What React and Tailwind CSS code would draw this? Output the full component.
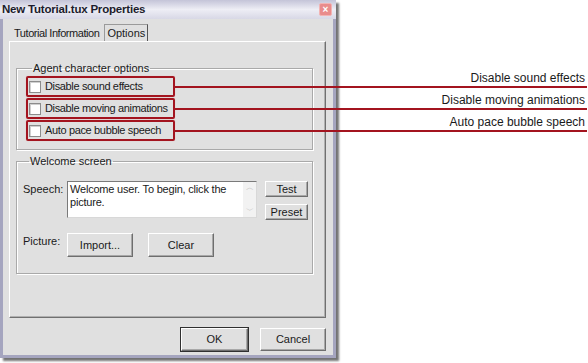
import React from "react";

const font = "font-['Liberation_Sans',Arial,sans-serif]";

const Btn = ({ label, className = "" }) => (
  <div
    className={`flex items-center justify-center bg-[#e0e0e0] border border-t-white border-l-white border-r-[#6e6e6e] border-b-[#6e6e6e] shadow-[inset_-1px_-1px_0_#a8a8a8] text-[11px] text-[#1a1a1a] ${className}`}
  >
    {label}
  </div>
);

const Option = ({ label, note }) => (
  <div className="relative w-[149px] h-[21px] border-2 border-[#a3141f] rounded-[2px] shadow-[0_0_1px_#e8a0a0] flex items-center pl-[1px]">
    <div className="w-[12px] h-[12px] bg-white border border-[#8c8c8c] shadow-[inset_1px_1px_0_#d0d0d0]" />
    <span className="ml-[4px] text-[11px] tracking-[-0.35px] text-[#1a1a1a] whitespace-nowrap">{label}</span>
    {/* callout line + note */}
    <div className="absolute left-full top-[8px] w-[414px] h-[2px] bg-[#a3141f]">
      <span className="absolute bottom-[3px] right-[2px] text-[12px] leading-[14px] text-[#1a1a1a] whitespace-nowrap">
        {note}
      </span>
    </div>
  </div>
);

const Group = ({ title, className = "", children }) => (
  <fieldset className={`border border-[#a9a9a9] shadow-[1px_1px_0_white,inset_1px_1px_0_white] ${className}`}>
    <legend className="ml-[6px] px-[1px] text-[11px] leading-[12px] text-[#1a1a1a]">{title}</legend>
    {children}
  </fieldset>
);

export default function App() {
  return (
    <div className={`relative w-[588px] h-[363px] bg-white overflow-hidden ${font}`}>
      {/* Dialog window */}
      <div className="w-[336px] h-[358px] flex flex-col bg-[#a5a5bf] shadow-[3px_3px_2px_rgba(0,0,0,0.55)]">
        {/* Title bar */}
        <div className="h-[19px] flex items-center justify-between pl-[2px] pr-[4px] bg-gradient-to-b from-[#c4c4d8] via-[#eeeef5] to-[#d8d8e6]">
          <span className="text-[11.5px] font-bold tracking-[-0.2px] text-[#1c1c2c]">New Tutorial.tux Properties</span>
          <div className="w-[13px] h-[13px] rounded-[2px] bg-[#e98c8c] border border-[#f2b4b4] flex items-center justify-center text-white text-[10px] leading-none font-bold">
            ×
          </div>
        </div>

        {/* Client area */}
        <div className="flex-1 mx-[3px] mb-[3px] bg-[#e0e0e0] flex flex-col px-[6px] pr-[7px]">
          {/* Tabs */}
          <div className="h-[22px] flex items-end pl-[5px]">
            <div className="h-[16px] flex items-center text-[11px] tracking-[-0.45px] text-[#1a1a1a]">Tutorial Information</div>
            <div className="ml-[5px] h-[17px] w-[44px] flex items-center justify-center border border-[#9a9a9a] border-r-[#555] border-b-0 text-[11px] text-[#1a1a1a]">
              Options
            </div>
          </div>

          {/* Tab panel */}
          <div className="h-[277px] border border-t-white border-l-white border-r-[#707070] border-b-[#707070] shadow-[inset_-1px_-1px_0_#b0b0b0] pl-[6px] pr-[12px] pt-[20px]">
            <Group title="Agent character options" className="h-[88px] pl-[9px] pt-[2px]">
              <div className="flex flex-col gap-[1px]">
                <Option label="Disable sound effects" note="Disable sound effects" />
                <Option label="Disable moving animations" note="Disable moving animations" />
                <Option label="Auto pace bubble speech" note="Auto pace bubble speech" />
              </div>
            </Group>

            <Group title="Welcome screen" className="mt-[5px] h-[119px] pl-[6px] pt-[14px]">
              <div className="flex">
                <span className="w-[44px] text-[11px] text-[#1a1a1a]">Speech:</span>
                <div className="w-[190px] h-[37px] bg-white border border-t-[#7a7a7a] border-l-[#7a7a7a] border-r-[#d8d8d8] border-b-[#d8d8d8] flex">
                  <div className="flex-1 pl-[2px] pt-[1px] text-[11px] leading-[13px] tracking-[-0.2px] text-[#1a1a1a]">
                    Welcome user. To begin, click the picture.
                  </div>
                  <div className="w-[13px] flex flex-col justify-between bg-[#f2f2f2]">
                    <div className="h-[12px] flex items-center justify-center text-[#c4c4c4] text-[8px]">︿</div>
                    <div className="h-[12px] flex items-center justify-center text-[#c4c4c4] text-[8px]">﹀</div>
                  </div>
                </div>
                <div className="ml-[8px] flex flex-col gap-[7px]">
                  <Btn label="Test" className="w-[43px] h-[16px]" />
                  <Btn label="Preset" className="w-[43px] h-[16px]" />
                </div>
              </div>
              <div className="mt-[13px] flex items-center">
                <span className="w-[44px] text-[11px] text-[#1a1a1a] -mt-[7px]">Picture:</span>
                <Btn label="Import..." className="w-[66px] h-[24px]" />
                <Btn label="Clear" className="ml-[15px] w-[66px] h-[24px]" />
              </div>
            </Group>
          </div>

          {/* Buttons */}
          <div className="mt-[10px] flex justify-end gap-[12px]">
            <Btn label="OK" className="w-[67px] h-[23px] outline outline-1 outline-[#303030]" />
            <Btn label="Cancel" className="w-[66px] h-[23px]" />
          </div>
        </div>
      </div>
    </div>
  );
}
